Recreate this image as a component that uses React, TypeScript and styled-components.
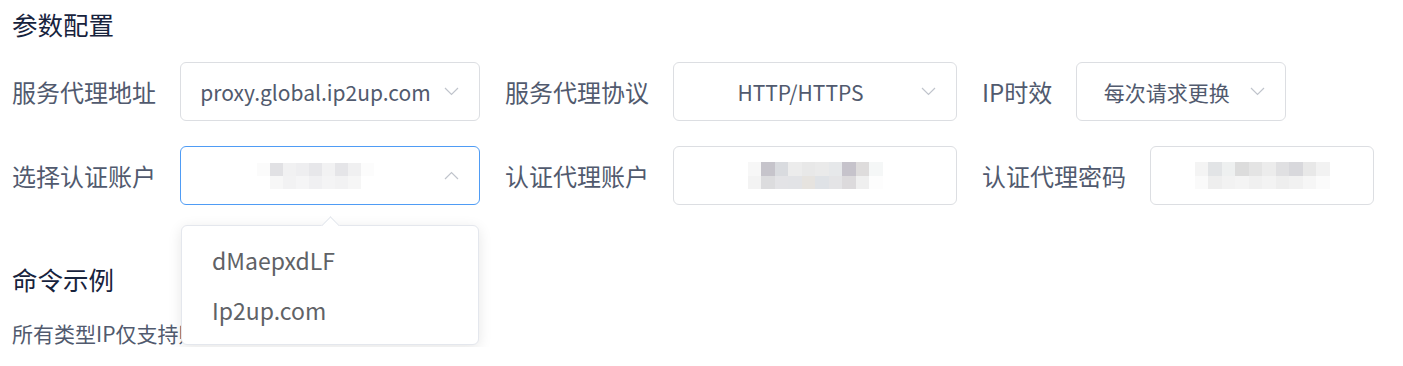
import React from "react";
import styled, { createGlobalStyle } from "styled-components";

const GlobalStyle = createGlobalStyle`
  body {
    margin: 0;
    background: #ffffff;
    font-family: "Noto Sans CJK SC", "Noto Sans", sans-serif;
  }
`;

const Page = styled.div`
  padding: 7px 12px 0 12px;
`;

const SectionTitle = styled.h2<{ $gap?: number }>`
  margin: ${(p) => p.$gap ?? 0}px 0 0 0;
  font-size: 25.5px;
  line-height: 34px;
  font-weight: 400;
  color: #17233d;
`;

const Form = styled.div`
  margin-top: 21px;
  display: flex;
  flex-direction: column;
  gap: 25px;
`;

const Row = styled.div`
  display: flex;
  align-items: center;
  gap: 25px;
  height: 59px;
`;

const Field = styled.div`
  display: flex;
  align-items: center;
  gap: 24px;
  height: 100%;
`;

const Label = styled.label`
  font-size: 24px;
  line-height: 32px;
  color: #515a6e;
  white-space: nowrap;
`;

const Control = styled.div`
  position: relative;
  height: 100%;
`;

const Box = styled.div<{ $width: number; $focused?: boolean }>`
  box-sizing: border-box;
  width: ${(p) => p.$width}px;
  height: 100%;
  display: flex;
  align-items: center;
  justify-content: center;
  border: 1px solid ${(p) => (p.$focused ? "#4f9cf5" : "#dcdee2")};
  border-radius: 6px;
  background: #fff;
`;

const SelectBox = styled(Box)`
  gap: 12px;
  padding: 0 20px 0 18px;
`;

const Value = styled.span`
  flex: 1;
  min-width: 0;
  text-align: center;
  font-size: 21px;
  color: #515a6e;
  white-space: nowrap;
  display: flex;
  justify-content: center;
`;

const Mosaic = styled.div<{ $cols: number; $cell: number }>`
  display: grid;
  grid-template-columns: repeat(${(p) => p.$cols}, ${(p) => p.$cell}px);
  grid-auto-rows: ${(p) => p.$cell}px;
`;

const Cell = styled.span<{ $c: string }>`
  background: ${(p) => p.$c};
`;

const Popover = styled.div`
  position: absolute;
  top: calc(100% + 20px);
  left: 1px;
  width: 298px;
  box-sizing: border-box;
  background: #fff;
  border: 1px solid #e4e7ed;
  border-radius: 6px;
  box-shadow: 0 3px 14px rgba(0, 0, 0, 0.1);
  padding: 9px 0;
  z-index: 10;

  &::before {
    content: "";
    position: absolute;
    top: -7px;
    left: 50%;
    width: 12px;
    height: 12px;
    margin-left: -6px;
    background: #fff;
    border-top: 1px solid #e4e7ed;
    border-left: 1px solid #e4e7ed;
    transform: rotate(45deg);
  }
`;

const Option = styled.div`
  height: 50px;
  line-height: 50px;
  padding: 0 30px;
  font-size: 23px;
  color: #606266;
`;

const Description = styled.p`
  margin: 23px 0 0 0;
  font-size: 21px;
  line-height: 28px;
  color: #515a6e;
`;

const Chevron = ({ up }: { up?: boolean }) => (
  <svg width="15" height="9" viewBox="0 0 15 9" fill="none">
    <path
      d={up ? "M1 8 L7.5 1.5 L14 8" : "M1 1 L7.5 7.5 L14 1"}
      stroke="#c0c4cc"
      strokeWidth="1.2"
    />
  </svg>
);

const Blur = ({ rows, cell }: { rows: string[][]; cell: number }) => (
  <Mosaic $cols={rows[0].length} $cell={cell}>
    {rows.flat().map((c, i) => (
      <Cell key={i} $c={c} />
    ))}
  </Mosaic>
);

const accountMask = [
  ["#fbfbfb", "#e1e1e4", "#f1f1f2", "#eeeef0", "#e7e7ea", "#f2f2f3", "#e5e5e8", "#f0f0f1", "#fcfcfc"],
  ["#ffffff", "#f7f7f7", "#f2f2f3", "#f5f5f6", "#f0f0f2", "#f4f4f5", "#f2f2f3", "#f6f6f6", "#ffffff"],
];

const userMask = [
  ["#f7f7f7", "#c6c4cb", "#d9dbdf", "#ececec", "#e8e8e8", "#eaeaea", "#e6e8ea", "#c6c3cb", "#dedcdc", "#f5f7f7"],
  ["#f3f3f3", "#dcdcde", "#e3e3e6", "#e2e3e6", "#e6e3df", "#dfe2e6", "#e4e4e6", "#dcdadc", "#efefef", "#fdfdfd"],
];

const passMask = [
  ["#f4f4f4", "#e2e4e6", "#eef0f0", "#dcdcdc", "#e4e4e4", "#ececec", "#e0e0e2", "#d8d8dc", "#e8e8e8", "#f2f2f2"],
  ["#fafafa", "#eeeeee", "#f2f2f2", "#f4f4f4", "#f0f0f0", "#f3f3f3", "#eeeeee", "#f1f1f1", "#f6f6f6", "#fbfbfb"],
];

export default function App() {
  return (
    <Page>
      <GlobalStyle />
      <SectionTitle>参数配置</SectionTitle>
      <Form>
        <Row>
          <Field>
            <Label>服务代理地址</Label>
            <Control>
              <SelectBox $width={300}>
                <Value>proxy.global.ip2up.com</Value>
                <Chevron />
              </SelectBox>
            </Control>
          </Field>
          <Field>
            <Label>服务代理协议</Label>
            <Control>
              <SelectBox $width={284}>
                <Value>HTTP/HTTPS</Value>
                <Chevron />
              </SelectBox>
            </Control>
          </Field>
          <Field>
            <Label>IP时效</Label>
            <Control>
              <SelectBox $width={210}>
                <Value>每次请求更换</Value>
                <Chevron />
              </SelectBox>
            </Control>
          </Field>
        </Row>
        <Row>
          <Field>
            <Label>选择认证账户</Label>
            <Control>
              <SelectBox $width={300} $focused>
                <Value>
                  <Blur rows={accountMask} cell={13} />
                </Value>
                <Chevron up />
              </SelectBox>
              <Popover>
                <Option>dMaepxdLF</Option>
                <Option>Ip2up.com</Option>
              </Popover>
            </Control>
          </Field>
          <Field>
            <Label>认证代理账户</Label>
            <Control>
              <Box $width={284}>
                <Blur rows={userMask} cell={13.5} />
              </Box>
            </Control>
          </Field>
          <Field>
            <Label>认证代理密码</Label>
            <Control>
              <Box $width={224}>
                <Blur rows={passMask} cell={13.5} />
              </Box>
            </Control>
          </Field>
        </Row>
      </Form>
      <SectionTitle $gap={57}>命令示例</SectionTitle>
      <Description>所有类型IP仅支持账密认证</Description>
    </Page>
  );
}
